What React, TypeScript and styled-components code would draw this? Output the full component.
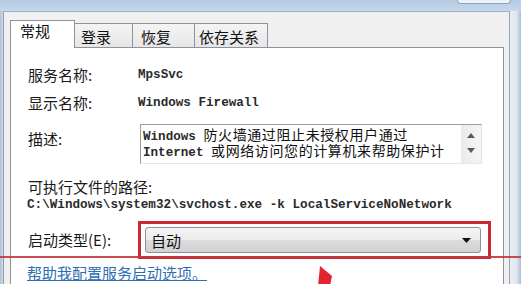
import React from "react";
import styled, { createGlobalStyle } from "styled-components";

const Global = createGlobalStyle`
  html, body { margin: 0; padding: 0; }
  body { background: #c9d9ea; }
`;

const CJK = `"Noto Sans CJK SC", "Noto Sans", sans-serif`;
const MONO = `"Liberation Mono", "Noto Sans CJK SC", monospace`;

const Root = styled.div`
  position: relative;
  width: 521px;
  height: 284px;
  overflow: hidden;
  display: flex;
  flex-direction: column;
  background: linear-gradient(90deg, #b7c9dd 0%, #c8d8ea 50%, #c3d4e7 100%);
`;

const TitleStrip = styled.div`
  height: 11px;
  flex: none;
  display: flex;
  justify-content: flex-end;
  padding-right: 10px;
  background: linear-gradient(180deg, #b4cbe3 0%, #c6d8ec 100%);
`;

const CaptionStub = styled.div`
  width: 52px;
  height: 3px;
  background: #eef3f9;
  border: 1px solid #8ea4bd;
  border-top: none;
  border-radius: 0 0 4px 4px;
`;

const FrameRow = styled.div`
  flex: 1;
  display: flex;
  min-height: 0;
`;

const SideFrame = styled.div<{ $w: number }>`
  width: ${(p) => p.$w}px;
  flex: none;
  background: linear-gradient(90deg, #aebfd2, #d2deea);
`;

const RightFrame = styled.div`
  flex: 1;
  background: linear-gradient(90deg, #e9eef4 0%, #dfe7f0 60%, #a9bdd3 100%);
`;

const Dialog = styled.div`
  width: 507px;
  flex: none;
  display: flex;
  flex-direction: column;
  background: #f0f0f0;
  border-top: 1px solid #9eb0c4;
  border-left: 1px solid #8d9db0;
  border-right: 1px solid #9aa6b4;
  padding: 8px 0 0 6px;
  box-sizing: border-box;
`;

const TabBar = styled.div`
  display: flex;
  align-items: flex-end;
  height: 28px;
  margin-bottom: -1px;
  position: relative;
  z-index: 1;
`;

const Tab = styled.div<{ $active?: boolean; $w: number; $pl: number }>`
  box-sizing: border-box;
  width: ${(p) => p.$w}px;
  height: ${(p) => (p.$active ? 28 : 24)}px;
  margin-bottom: ${(p) => (p.$active ? 0 : 1)}px;
  margin-left: -1px;
  padding-left: ${(p) => p.$pl}px;
  padding-top: ${(p) => (p.$active ? 0 : 3)}px;
  border: 1px solid #8e939b;
  border-bottom: none;
  background: ${(p) =>
    p.$active ? "#ffffff" : "linear-gradient(180deg, #f4f4f4 0%, #e6e6e6 100%)"};
  font-family: ${CJK};
  font-size: 15px;
  line-height: 20px;
  color: #111;
  &:first-child { margin-left: 0; }
`;

const Panel = styled.div`
  width: 494px;
  flex: 1;
  box-sizing: border-box;
  background: #ffffff;
  border: 1px solid #8e939b;
  border-bottom: none;
  padding: 17px 0 0 17px;
  display: flex;
  flex-direction: column;
`;

const Row = styled.div<{ $mt?: number; $h?: number; $align?: string }>`
  display: grid;
  grid-template-columns: 110px 1fr;
  align-items: ${(p) => p.$align || "center"};
  margin-top: ${(p) => p.$mt || 0}px;
  min-height: ${(p) => p.$h || 20}px;
`;

const Label = styled.div<{ $pt?: number; $mt?: number }>`
  font-family: ${CJK};
  font-size: 15px;
  line-height: 20px;
  color: #1a1a1a;
  padding-top: ${(p) => p.$pt || 0}px;
  margin-top: ${(p) => p.$mt || 0}px;
  white-space: nowrap;
`;

const Value = styled.div`
  font-family: ${MONO};
  font-size: 12.6px;
  font-weight: bold;
  line-height: 20px;
  color: #2a2a2a;
  white-space: nowrap;
`;

const TextBox = styled.div`
  margin-left: 2px;
  width: 342px;
  height: 40px;
  box-sizing: border-box;
  border: 1px solid #9a9ca3;
  border-bottom-color: #e3e9ef;
  border-right-color: #dbdfe6;
  display: flex;
`;

const TextBody = styled.div`
  flex: 1;
  padding: 1px 0 0 2px;
`;

const Line = styled.div`
  height: 16px;
  line-height: 16px;
  white-space: nowrap;
  color: #111;
`;

const Lat = styled.span`
  font-family: ${MONO};
  font-size: 12.6px;
  font-weight: bold;
  color: #2a2a2a;
`;

const Han = styled.span`
  font-family: ${CJK};
  font-size: 14px;
  letter-spacing: 0.6px;
`;

const ScrollBar = styled.div`
  width: 20px;
  background: linear-gradient(90deg, #eaeaea, #f6f6f6);
  display: flex;
  flex-direction: column;
  align-items: center;
  padding-top: 8px;
  gap: 10px;
`;

const Path = styled.div`
  font-family: ${MONO};
  font-size: 12.65px;
  font-weight: bold;
  line-height: 16px;
  color: #2a2a2a;
  margin-left: -1px;
  white-space: nowrap;
`;

const Highlight = styled.div`
  width: 353px;
  box-sizing: border-box;
  border: 3px solid #cc2a33;
  padding: 3px 7px 3px 4px;
`;

const Select = styled.div`
  height: 26px;
  box-sizing: border-box;
  border: 1px solid #8c8f94;
  border-radius: 3px;
  background: linear-gradient(180deg, #f4f4f4 0%, #ececec 50%, #dcdcdc 51%, #d2d2d2 100%);
  display: flex;
  align-items: center;
  justify-content: space-between;
  padding: 0 9px 0 5px;
  font-family: ${CJK};
  font-size: 15px;
  color: #111;
`;

const Link = styled.div`
  margin-top: 4px;
  margin-left: -1px;
  font-family: ${CJK};
  font-size: 15px;
  line-height: 20px;
  color: #2f6db3;
  text-decoration: underline;
  white-space: nowrap;
`;

const AnnotationLine = styled.div`
  position: absolute;
  left: 0;
  right: 0;
  top: 256px;
  height: 2px;
  background: #c23a40;
  opacity: 0.9;
  pointer-events: none;
`;

const Arrow = styled.svg`
  position: absolute;
  left: 314px;
  top: 264px;
  pointer-events: none;
`;

export default function App() {
  return (
    <>
      <Global />
      <Root>
        <TitleStrip>
          <CaptionStub />
        </TitleStrip>
        <FrameRow>
          <SideFrame $w={3} />
          <Dialog>
            <TabBar>
              <Tab $active $w={65} $pl={9}>常规</Tab>
              <Tab $w={59} $pl={6}>登录</Tab>
              <Tab $w={63} $pl={8}>恢复</Tab>
              <Tab $w={74} $pl={4}>依存关系</Tab>
            </TabBar>
            <Panel>
              <Row>
                <Label>服务名称:</Label>
                <Value>MpsSvc</Value>
              </Row>
              <Row $mt={8}>
                <Label>显示名称:</Label>
                <Value>Windows Firewall</Value>
              </Row>
              <Row $mt={11} $h={40} $align="start">
                <Label $pt={5}>描述:</Label>
                <TextBox>
                  <TextBody>
                    <Line>
                      <Lat>Windows </Lat>
                      <Han>防火墙通过阻止未授权用户通过</Han>
                    </Line>
                    <Line>
                      <Lat>Internet </Lat>
                      <Han>或网络访问您的计算机来帮助保护计</Han>
                    </Line>
                  </TextBody>
                  <ScrollBar>
                    <svg width="8" height="5" viewBox="0 0 8 5">
                      <path d="M0 5 L4 0 L8 5 Z" fill="#5a5a5a" />
                    </svg>
                    <svg width="8" height="5" viewBox="0 0 8 5">
                      <path d="M0 0 L8 0 L4 5 Z" fill="#5a5a5a" />
                    </svg>
                  </ScrollBar>
                </TextBox>
              </Row>
              <Label $mt={13}>可执行文件的路径:</Label>
              <Path>C:\Windows\system32\svchost.exe -k LocalServiceNoNetwork</Path>
              <Row $mt={8} $h={36}>
                <Label>启动类型(E):</Label>
                <Highlight>
                  <Select>
                    <span>自动</span>
                    <svg width="9" height="5" viewBox="0 0 9 5">
                      <path d="M0 0 L9 0 L4.5 5 Z" fill="#111" />
                    </svg>
                  </Select>
                </Highlight>
              </Row>
              <Link>帮助我配置服务启动选项。</Link>
            </Panel>
          </Dialog>
          <RightFrame />
        </FrameRow>
        <AnnotationLine />
        <Arrow width="22" height="22" viewBox="0 0 22 22">
          <path d="M6 2 L18 12 L16 22 L4 22 Z" fill="#e0262f" />
        </Arrow>
      </Root>
    </>
  );
}
